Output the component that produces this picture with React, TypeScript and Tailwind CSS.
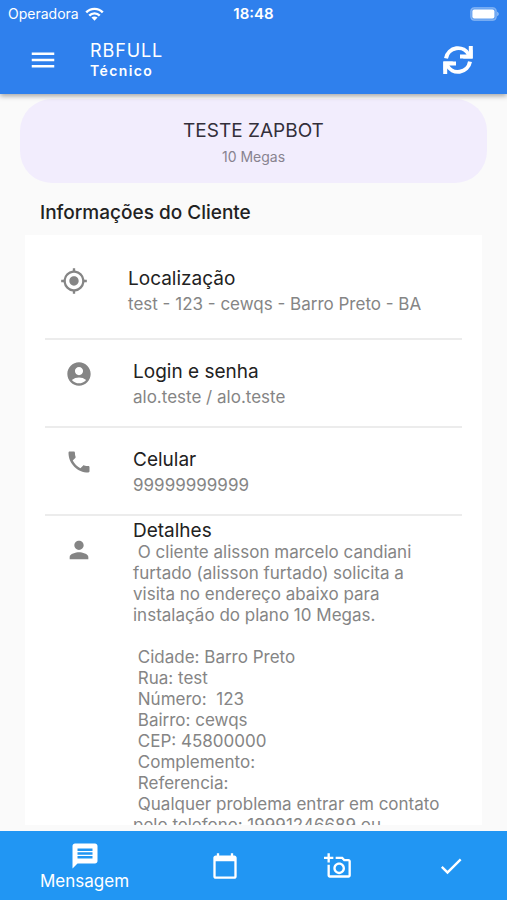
import React from "react";
import {
  MdAccountCircle,
  MdCalendarToday,
  MdCheck,
  MdMenu,
  MdMessage,
  MdMyLocation,
  MdOutlineAddAPhoto,
  MdPerson,
  MdPhone,
} from "react-icons/md";

type tRow = {
  icon: React.ReactNode;
  title: string;
  text: string;
  dense?: boolean;
  className?: string;
};

const details = ` O cliente alisson marcelo candiani furtado (alisson furtado) solicita a visita no endereço abaixo para instalação do plano 10 Megas.

 Cidade: Barro Preto
 Rua: test
 Número:  123
 Bairro: cewqs
 CEP: 45800000
 Complemento:
 Referencia:
 Qualquer problema entrar em contato pelo telefone: 19991246689 ou`;

function StatusBar() {
  return (
    <div className="grid grid-cols-3 items-center h-7 px-2 text-sm">
      <div className="flex items-center gap-1.5">
        <span>Operadora</span>
        <svg width="19" height="14" viewBox="0 0 20 14" fill="none" stroke="currentColor" strokeWidth="2.6">
          <path d="M1.3 5.2C6 .4 14 .4 18.7 5.2" />
          <path d="M4.5 8.6c3-3 8-3 11 0" />
          <path d="M6.8 10.7c1.9-1.6 4.5-1.6 6.4 0L10 14z" fill="currentColor" stroke="none" />
        </svg>
      </div>
      <span className="text-center text-[15px] font-semibold">18:48</span>
      <svg className="justify-self-end" width="29" height="14" viewBox="0 0 29 14">
        <rect x="0.7" y="0.7" width="25.6" height="12.6" rx="3.6" fill="#fff" fillOpacity="0.25" stroke="#fff" strokeOpacity="0.3" strokeWidth="1.2" />
        <rect x="2.4" y="2.4" width="22" height="9.2" rx="2" fill="#fff" />
        <path d="M27.2 4.8c2 .7 2 3.7 0 4.4z" fill="#fff" fillOpacity="0.5" />
      </svg>
    </div>
  );
}

function RefreshIcon() {
  return (
    <svg width="30" height="30" viewBox="0 0 30 30" fill="none" stroke="currentColor" strokeWidth="4">
      <path d="M3 13.3A12.2 12.2 0 0 1 26 10" />
      <path d="M27.8 1V11.500H17" />
      <path d="M29.500 13.500H20l9.500-9z" fill="currentColor" stroke="none" />
      <path d="M27 16.700A12.200 12.200 0 0 1 4 20" />
      <path d="M2.200 29V18.500H13" />
      <path d="M.5 16.500H10l-9.500 9z" fill="currentColor" stroke="none" />
    </svg>
  );
}

function Header() {
  return (
    <header className="relative z-10 bg-[#2f80ed] text-white shadow-[0_2px_5px_rgba(0,0,0,0.35)]">
      <StatusBar />
      <div className="flex items-center h-16 mb-0.5 pl-7 pr-[34px]">
        <button type="button" aria-label="Menu">
          <MdMenu size={30} />
        </button>
        <div className="flex-1 pl-8 pt-0.5">
          <h1 className="text-lg leading-5 tracking-wider">RBFULL</h1>
          <p className="text-sm leading-5 font-semibold tracking-widest">Técnico</p>
        </div>
        <button type="button" aria-label="Atualizar">
          <RefreshIcon />
        </button>
      </div>
    </header>
  );
}

function Row({ icon, title, text, dense, className }: tRow) {
  return (
    <li className={`flex ${className ?? ""}`}>
      <div className={`w-[68px] shrink-0 text-[#858585] ${dense ? "pt-4" : "pt-0.5"}`}>
        {icon}
      </div>
      <div className="flex-1 min-w-0">
        <h3 className={`text-[19px] text-[#222222] ${dense ? "leading-[22px]" : "leading-7"}`}>
          {title}
        </h3>
        <p
          className={`text-[17px] text-[#858585] whitespace-pre-wrap ${
            dense ? "leading-[21px]" : "leading-[22px]"
          }`}
        >
          {text}
        </p>
      </div>
    </li>
  );
}

export default function App() {
  return (
    <div className="flex flex-col h-screen bg-[#fafafa] font-['Inter',sans-serif]">
      <Header />
      <main className="flex flex-col flex-1 min-h-0 pb-1.5">
        <section className="mx-5 mt-[5px] pt-5 pb-3 rounded-[32px] bg-[#f2edfd] text-center">
          <h2 className="text-[19px] leading-6 text-[#332f3a]">TESTE ZAPBOT</h2>
          <p className="text-sm leading-7 text-[#88838f]">10 Megas</p>
        </section>
        <h2 className="px-10 pt-4 pb-2 text-[19px] leading-7 font-medium text-[#222222]">
          Informações do Cliente
        </h2>
        <ul className="flex-1 min-h-0 mx-[25px] px-5 overflow-hidden bg-white divide-y-2 divide-[#ececec]">
          <Row
            className="pl-[15px] pt-[30px] pb-[23px]"
            icon={<MdMyLocation size={28} />}
            title="Localização"
            text="test - 123 - cewqs - Barro Preto - BA"
          />
          <Row
            className="pl-5 py-[18px]"
            icon={<MdAccountCircle size={28} />}
            title="Login e senha"
            text="alo.teste / alo.teste"
          />
          <Row
            className="pl-5 py-[18px]"
            icon={<MdPhone size={28} />}
            title="Celular"
            text="99999999999"
          />
          <Row
            dense
            className="px-5 pt-1"
            icon={<MdPerson size={28} />}
            title="Detalhes"
            text={details}
          />
        </ul>
      </main>
      <nav className="grid grid-cols-[3fr_2fr_2fr_2fr] items-center h-[69px] bg-[#2196f3] text-white">
        <button type="button" className="flex flex-col items-center">
          <MdMessage size={30} />
          <span className="text-[17px] leading-5">Mensagem</span>
        </button>
        <button type="button" aria-label="Agenda" className="flex justify-center">
          <MdCalendarToday size={28} />
        </button>
        <button type="button" aria-label="Adicionar foto" className="flex justify-center">
          <MdOutlineAddAPhoto size={28} />
        </button>
        <button type="button" aria-label="Concluir" className="flex justify-center">
          <MdCheck size={28} />
        </button>
      </nav>
    </div>
  );
}
